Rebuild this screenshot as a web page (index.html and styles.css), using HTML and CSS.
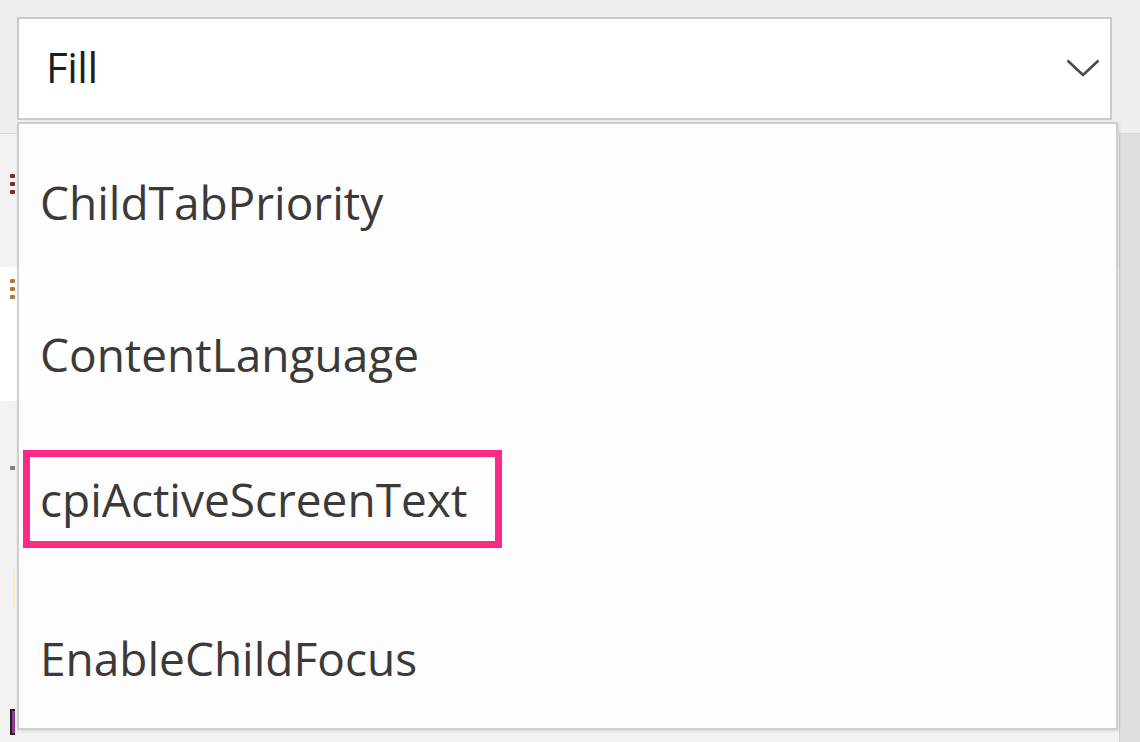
FILE: index.html
```html
<!DOCTYPE html>
<html>
<head>
<meta charset="utf-8">
<link rel="stylesheet" href="styles.css">
</head>
<body>
<div class="page">
  <header class="header">
    <div class="select">
      <span class="select-value">Fill</span>
      <svg class="chevron" width="34" height="18" viewBox="0 0 34 18"><path d="M1.5 1.5 L17 16 L32.5 1.5" fill="none" stroke="#4a4a4a" stroke-width="2.6"/></svg>
    </div>
  </header>
  <main class="content">
    <div class="rows">
      <div class="row row-gray"><span class="dots dots-red"><i></i><i></i><i></i></span></div>
      <div class="row row-white"><span class="dots dots-orange"><i></i><i></i><i></i></span></div>
      <div class="row row-gray row-tall">
        <span class="dot-single"></span>
        <span class="mark-yellow"></span>
        <span class="bracket"></span>
      </div>
    </div>
    <div class="side"></div>
  </main>
  <ul class="dropdown">
    <li class="item">ChildTabPriority</li>
    <li class="item">ContentLanguage</li>
    <li class="item"><span class="highlight">cpiActiveScreenText</span></li>
    <li class="item">EnableChildFocus</li>
  </ul>
</div>
</body>
</html>
```
FILE: styles.css
```css
html, body {
  margin: 0;
  padding: 0;
}
body {
  width: 1140px;
  height: 742px;
  overflow: hidden;
  background: #efefef;
  font-family: "Open Sans", "Noto Sans", sans-serif;
}
.page {
  position: relative;
  width: 1140px;
  height: 742px;
  display: flex;
  flex-direction: column;
}
.header {
  height: 134px;
  border-bottom: 1px solid #d9d9d9;
  padding: 17px 0 0 17px;
  box-sizing: border-box;
  background: #efefef;
}
.select {
  width: 1095px;
  height: 103px;
  box-sizing: border-box;
  border: 2px solid #c9c9c9;
  background: #ffffff;
  display: flex;
  align-items: center;
  justify-content: space-between;
  padding: 0 10px 0 27px;
}
.select-value {
  font-size: 42px;
  color: #1e1e1e;
  letter-spacing: -0.5px;
  margin-top: -4px;
}
.chevron {
  margin-top: -2px;
}
.content {
  flex: 1;
  display: flex;
}
.rows {
  width: 1120px;
  display: flex;
  flex-direction: column;
}
.row {
  position: relative;
  border-right: 1px solid #d0d0d0;
}
.row-gray { background: #f3f2f1; height: 133px; }
.row-white { background: #ffffff; height: 134px; }
.row-tall { flex: 1; }
.side {
  flex: 1;
  background: #dedede;
}
.dots {
  position: absolute;
  left: 10px;
  display: flex;
  flex-direction: column;
  gap: 4px;
}
.dots i {
  display: block;
  width: 5px;
  height: 4px;
  border-radius: 1px;
}
.dots-red { top: 40px; }
.dots-red i { background: #7b2a22; }
.dots-orange { top: 12px; }
.dots-orange i { background: #b9773e; }
.dot-single {
  position: absolute;
  left: 10px;
  top: 65px;
  width: 5px;
  height: 4px;
  background: #8a7f86;
}
.mark-yellow {
  position: absolute;
  left: 13px;
  top: 168px;
  width: 2px;
  height: 40px;
  background: #f4eec2;
}
.bracket {
  position: absolute;
  left: 10px;
  top: 308px;
  width: 3px;
  height: 22px;
  border: 2px solid #2a1d2a;
  border-right: none;
  background: #8e3c8e;
}
.dropdown {
  position: absolute;
  left: 17px;
  top: 122px;
  width: 1101px;
  height: 608px;
  margin: 0;
  padding: 2px 0 0 0;
  list-style: none;
  box-sizing: border-box;
  background: #fdfdfd;
  border: 2px solid #cfcfcf;
  box-shadow: 1px 1px 3px rgba(0,0,0,0.12);
}
.item {
  height: 152px;
  display: flex;
  align-items: center;
  padding-left: 21px;
  font-size: 46px;
  color: #3b3a39;
  letter-spacing: 0;
  box-sizing: border-box;
}
.highlight {
  margin-left: -17px;
  padding: 0 28px 0 10px;
  height: 84px;
  display: flex;
  align-items: center;
  border: 7px solid #fb2a85;
  margin-top: -14px;
}
```
